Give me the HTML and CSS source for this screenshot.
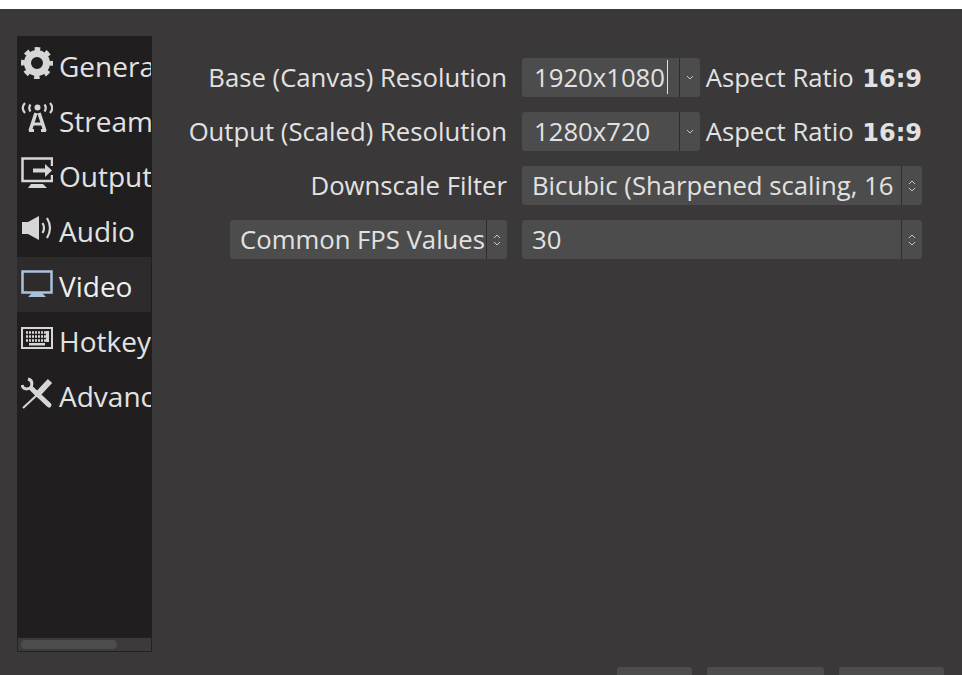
FILE: index.html
```html
<!DOCTYPE html>
<html lang="en">
<head>
    <meta charset="UTF-8">
    <meta name="viewport" content="width=device-width, initial-scale=1.0">
    <title>Settings</title>
    <link rel="stylesheet" href="styles.css">
</head>
<body>

<div class="topbar"></div>

<div class="window">
    <!-- Settings categories -->
    <nav class="sidebar">
        <div class="side-list">
            <div class="side-item">
                <svg class="side-icon" viewBox="0 0 32 32" fill="none" stroke="#d6d6d6">
                    <circle cx="16" cy="16" r="9.500" stroke-width="7"/>
                    <circle cx="16" cy="16" r="14" stroke-width="4" stroke-dasharray="5.500 5.500" stroke-dashoffset="2.750"/>
                </svg>
                <span class="side-label">General</span>
            </div>
            <div class="side-item">
                <svg class="side-icon" viewBox="0 0 32 32" fill="none" stroke="#d6d6d6">
                    <circle cx="16.500" cy="5.500" r="3" fill="#d6d6d6" stroke="none"/>
                    <path stroke-width="2.200" d="M4 1Q-.5 6 4 11M9.500 2.500Q7 6 9.500 9.500M29 1Q33.500 6 29 11M23.500 2.500Q26 6 23.500 9.500"/>
                    <path stroke-width="3.500" d="M15 11 9 29M18 11 24 29"/>
                    <path stroke-width="3" d="M11 22h11M8 28.500h5M20 28.500h5"/>
                </svg>
                <span class="side-label">Stream</span>
            </div>
            <div class="side-item">
                <svg class="side-icon" viewBox="0 0 32 32">
                    <path fill="none" stroke="#d6d6d6" stroke-width="2.500" d="M31 9V1.500H1.500V24H31v-6"/>
                    <path fill="#d6d6d6" d="M12 11.500h12V7l7 6.500-7 6.500v-4.500H12zM10 27h12l4 4H7z"/>
                </svg>
                <span class="side-label">Output</span>
            </div>
            <div class="side-item">
                <svg class="side-icon" viewBox="0 0 32 32" fill="none">
                    <path fill="#d6d6d6" d="M1 10h6l11-6v24L7 22H1z"/>
                    <path stroke="#d6d6d6" stroke-width="2.200" d="M21.500 11q3 5 0 10M26 6q6 10 0 20"/>
                </svg>
                <span class="side-label">Audio</span>
            </div>
            <div class="side-item active">
                <svg class="side-icon" viewBox="0 0 32 32">
                    <path fill="none" stroke="#a9c3dc" stroke-width="2.500" d="M1.500 4.500h29v21h-29z"/>
                    <path fill="#a9c3dc" d="M11 26h10l4 4H7z"/>
                </svg>
                <span class="side-label">Video</span>
            </div>
            <div class="side-item">
                <svg class="side-icon" viewBox="0 0 32 32">
                    <path fill="none" stroke="#d6d6d6" stroke-width="2" d="M1 6h30v20H1z"/>
                    <path fill="none" stroke="#d6d6d6" stroke-width="2.500" stroke-dasharray="2 1" d="M5 10.500h20M5 14.500h20M5 18.500h20"/>
                    <path fill="#d6d6d6" d="M25 9h3v11h-3zM8 21h16v2.500H8z"/>
                </svg>
                <span class="side-label">Hotkeys</span>
            </div>
            <div class="side-item">
                <svg class="side-icon" viewBox="0 0 32 32" fill="none" stroke="#d6d6d6">
                    <path stroke-width="6" d="M29 4 15 19"/>
                    <path stroke-width="2" d="M16 18 2 31"/>
                    <path stroke-width="3" d="M7 2A5 5 0 1 1 1 8"/>
                    <path stroke-width="5" stroke-linecap="round" d="M11 12 28 28"/>
                </svg>
                <span class="side-label">Advanced</span>
            </div>
        </div>
        <div class="side-scroll"><div class="side-thumb"></div></div>
    </nav>

    <!-- Video settings form -->
    <main class="form">
        <div class="row">
            <div class="row-label">Base (Canvas) Resolution</div>
            <div class="row-field">
                <div class="combo small editing"><span class="combo-text">1920x1080</span><span class="combo-btn"><svg class="chev" viewBox="0 0 8 5"><path d="M1 1l3 3 3-3"/></svg></span></div>
                <div class="aspect">Aspect Ratio <b>16:9</b></div>
            </div>
        </div>
        <div class="row">
            <div class="row-label">Output (Scaled) Resolution</div>
            <div class="row-field">
                <div class="combo small"><span class="combo-text">1280x720</span><span class="combo-btn"><svg class="chev" viewBox="0 0 8 5"><path d="M1 1l3 3 3-3"/></svg></span></div>
                <div class="aspect">Aspect Ratio <b>16:9</b></div>
            </div>
        </div>
        <div class="row">
            <div class="row-label">Downscale Filter</div>
            <div class="row-field">
                <div class="combo wide"><span class="combo-text">Bicubic (Sharpened scaling, 16</span><span class="combo-btn"><svg class="spin" viewBox="0 0 8 14"><path d="M1 5l3-3 3 3M1 9l3 3 3-3"/></svg></span></div>
            </div>
        </div>
        <div class="row">
            <div class="row-label">
                <div class="combo fps"><span class="combo-text">Common FPS Values</span><span class="combo-btn"><svg class="spin" viewBox="0 0 8 14"><path d="M1 5l3-3 3 3M1 9l3 3 3-3"/></svg></span></div>
            </div>
            <div class="row-field">
                <div class="combo wide"><span class="combo-text">30</span><span class="combo-btn"><svg class="spin" viewBox="0 0 8 14"><path d="M1 5l3-3 3 3M1 9l3 3 3-3"/></svg></span></div>
            </div>
        </div>
    </main>
</div>

<!-- Dialog buttons, cut off by the bottom of the window -->
<div class="buttons">
    <div class="btn btn-ok"></div>
    <div class="btn btn-cancel"></div>
    <div class="btn btn-apply"></div>
</div>

</body>
</html>
```

FILE: styles.css
```css
/* Styling for the entire page */
html, body {
    height: 100%;
}

body {
    margin: 0;
    background-color: #3a3839;
    color: #e2e2e2;
    font-family: "Open Sans", "Noto Sans", sans-serif;
    font-size: 25.7px;
    overflow: hidden;
}

.topbar {
    height: 9px;
    background-color: #fff;
}

.window {
    display: flex;
    height: 643px;
    padding: 27px 0 0 17px;
    box-sizing: border-box;
}

/* Sidebar with the settings categories */
.sidebar {
    width: 135px;
    height: 616px;
    background-color: #201e1f;
    display: flex;
    flex-direction: column;
    box-sizing: border-box;
}

.side-list {
    flex-grow: 1;
    padding-top: 1px;
    overflow: hidden;
}

.side-item {
    width: 134px;
    height: 55px;
    padding-left: 4px;
    box-sizing: border-box;
    display: flex;
    align-items: center;
    gap: 6px;
    overflow: hidden;
    font-size: 28px;
}

.side-item.active {
    background-color: #2d2b2c;
    color: #f0f0f0;
}

.side-icon {
    width: 32px;
    height: 32px;
    flex-shrink: 0;
    margin-top: -3px;
}

.side-label {
    white-space: nowrap;
    margin-top: 2px;
}

.side-scroll {
    height: 15px;
    background-color: #3c3a3b;
    border: 1px solid #222;
    box-sizing: border-box;
    padding: 2px 3px;
}

.side-thumb {
    width: 96px;
    height: 9px;
    border-radius: 5px;
    background-color: #4d4d4d;
}

/* Form rows */
.form {
    flex-grow: 1;
    padding-top: 22px;
    display: flex;
    flex-direction: column;
    gap: 15px;
}

.row {
    display: flex;
    height: 39px;
    gap: 15px;
}

.row-label {
    width: 355px;
    display: flex;
    align-items: center;
    justify-content: flex-end;
    white-space: nowrap;
}

.row-field {
    width: 400px;
    display: flex;
    align-items: center;
    gap: 6px;
}

/* Combo boxes */
.combo {
    height: 39px;
    display: flex;
    align-items: center;
    background-color: #4c4c4c;
    border-radius: 3px;
    overflow: hidden;
    white-space: nowrap;
}

.combo.small {
    width: 178px;
}

.combo.wide {
    width: 400px;
}

.combo.fps {
    width: 277px;
}

.combo-text {
    flex-grow: 1;
    padding-left: 10px;
    overflow: hidden;
}

.combo.small .combo-text {
    padding-left: 12px;
}

.combo-btn {
    width: 21px;
    height: 100%;
    flex-shrink: 0;
    border-left: 1px solid #2f2d2e;
    box-sizing: border-box;
    display: flex;
    align-items: center;
    justify-content: center;
}

.editing {
    position: relative;
}

/* text cursor in the editable combo */
.editing::after {
    content: "";
    position: absolute;
    top: 2px;
    bottom: 3px;
    left: 145px;
    width: 1px;
    background-color: #dfdfdf;
}

.chev, .spin {
    fill: none;
    stroke: #c8c8c8;
    stroke-width: 1;
}

.chev {
    width: 8px;
    height: 5px;
}

.spin {
    width: 8px;
    height: 14px;
}

.aspect {
    white-space: nowrap;
}

.aspect b {
    font-family: "DejaVu Sans", sans-serif;
    font-size: 24px;
    font-weight: 700;
    margin-left: 2px;
}

/* Bottom buttons */
.buttons {
    display: flex;
    justify-content: flex-end;
    gap: 15px;
    padding: 15px 18px 0 0;
}

.btn {
    height: 30px;
    background-color: #4d4d4d;
    border-radius: 3px;
}

.btn-ok {
    width: 75px;
}

.btn-cancel {
    width: 117px;
}

.btn-apply {
    width: 105px;
}
```
